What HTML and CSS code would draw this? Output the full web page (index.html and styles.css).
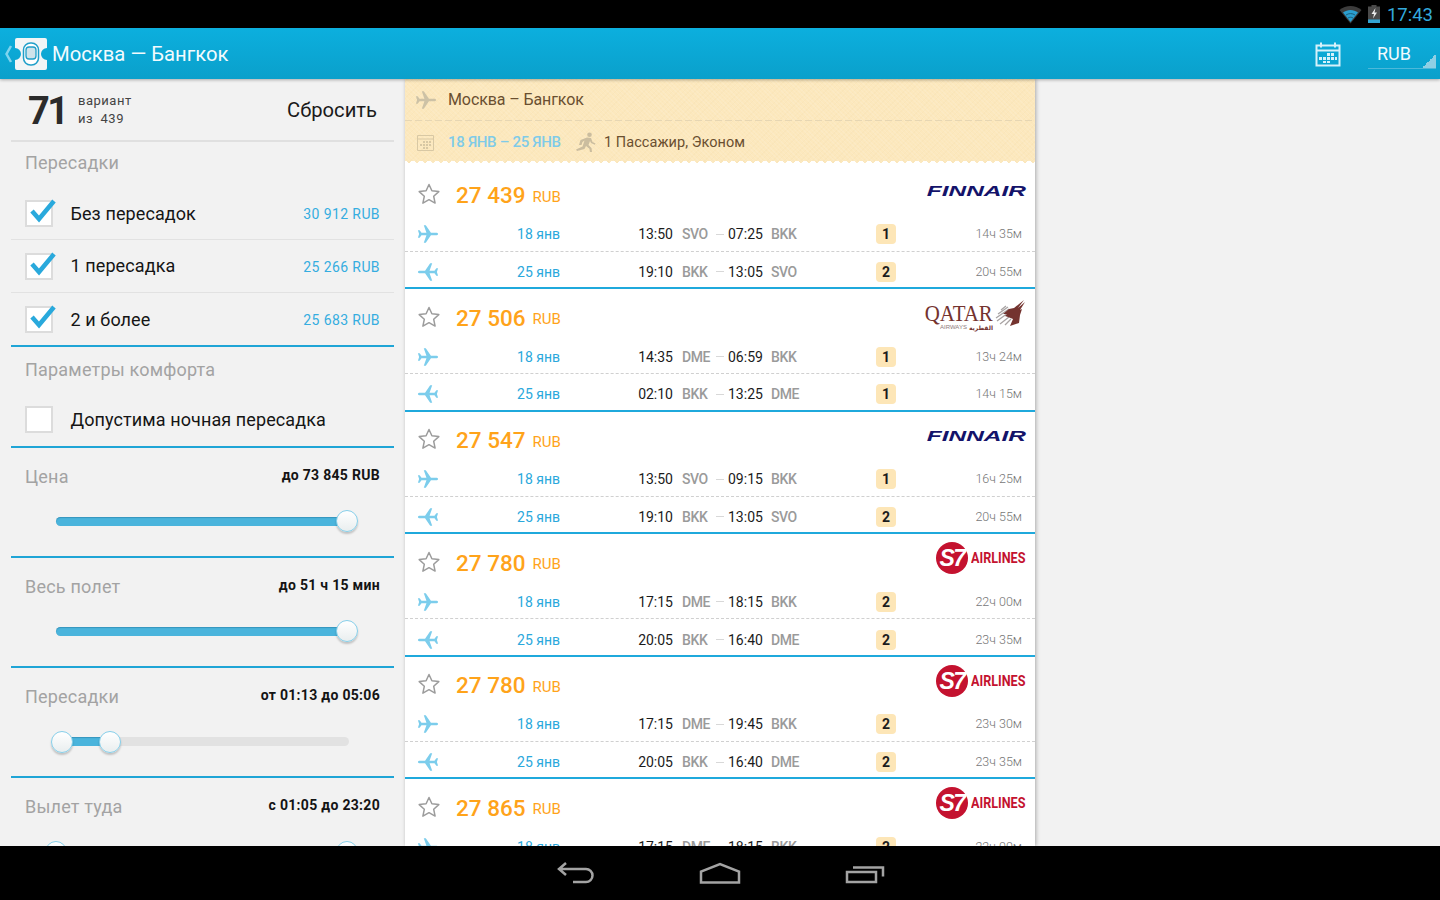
FILE: index.html
```html
<!DOCTYPE html>
<html lang="ru">
<head>
<meta charset="utf-8">
<title>Москва — Бангкок</title>
<link rel="stylesheet" href="styles.css">
</head>
<body>
<svg class="defs" width="0" height="0">
  <symbol id="plane" viewBox="0 0 24 24"><path d="M23 12c0-.9-1.100-1.400-2.200-1.400h-5.600L9.600 2.500H7.400l2.900 8.100H4.900L2.900 8H1l1.300 4L1 16h1.900l2-2.600h5.400l-2.900 8.100h2.200l5.600-8.100h5.600c1.100 0 2.200-.5 2.200-1.400z"/></symbol>
  <symbol id="star" viewBox="0 0 24 24"><path d="M12 2.500l2.900 6.300 6.900.8-5.100 4.700 1.400 6.800-6.100-3.400-6.100 3.400 1.400-6.800L2.200 9.600l6.900-.8z" fill="none" stroke="#9c9c9c" stroke-width="1.500" stroke-linejoin="round"/></symbol>
  <symbol id="check" viewBox="0 0 32 28"><path d="M6 13l7 8L28 3" fill="none" stroke="#29a9dc" stroke-width="4.500"/></symbol>
  <symbol id="bird" viewBox="0 0 31 28"><path d="M11 7l-5 4M13 8L3 15M14 10L1 19M13 14L2 22M14 18L5 25M16 20l-6 6" stroke="#a8a3a3" stroke-width="1.300" fill="none"/><path d="M8 15l6-5 5-1L29 1l-6 8 7-6-5 8 2-1-2 6-1 8-9 3 3-7-5-2-3-1 2-2z" fill="#74332f"/></symbol>
</svg>

<header class="status">
  <svg class="wifi" width="23" height="20" viewBox="0 0 23 20"><path d="M.5 6C6.800.6 16.200.6 22.500 6L11.500 19.500z" fill="#3c3c3c"/><path d="M4 8.500c4.300-3.400 10.700-3.400 15 0L11.500 18z" fill="#2a9fd0"/><path d="M7 11c2.700-1.900 6.300-1.900 9 0M9 14c1.500-1 3.500-1 5 0" fill="none" stroke="#1a5f7d"/></svg>
  <svg class="batt" width="12" height="18" viewBox="0 0 12 18"><path d="M3.500 0h5v1.500H12V18H0V1.500h3.500z" fill="#4a4a4a"/><path d="M0 14.500h12V18H0z" fill="#33a4d2"/><path d="M7.500 3L3.500 9h2.500l-1 4.500 4-6H6.500z" fill="#eee"/></svg>
  <span class="clock">17:43</span>
</header>

<div class="bar">
  <svg class="chev" width="9" height="20" viewBox="0 0 9 20"><path d="M7 2L2.500 10 7 18" fill="none" stroke="#7fd4ee" stroke-width="2.500"/></svg>
  <svg class="logo" width="34" height="34" viewBox="0 0 34 34"><path d="M3 1h28a2 2 0 0 1 2 2v8a6 6 0 0 0 0 12v8a2 2 0 0 1-2 2H3a2 2 0 0 1-2-2v-8a6 6 0 0 0 0-12V3a2 2 0 0 1 2-2z" fill="#f2f5f6"/><rect x="9.500" y="6" width="15" height="22" rx="7" fill="#fff" stroke="#1f9fc9" stroke-width="1.500"/><rect x="12" y="10" width="10" height="12" rx="3" fill="#cfe3ea" stroke="#1f9fc9" stroke-width="1.300"/></svg>
  <h1 class="bar-title">Москва — Бангкок</h1>
  <svg class="cal" width="26" height="26" viewBox="0 0 26 26"><path d="M1.500 4.500h23v20h-23zM1.500 9.500h23M6 1.500v5M20 1.500v5" fill="none" stroke="#d6f1fa" stroke-width="2"/><path d="M12 12h3v3h-3zM16 12h3v3h-3zM8 16h3v3H8zM12 16h3v3h-3zM16 16h3v3h-3zM20 16h2v3h-2zM4 16h3v3H4zM8 20h3v2H8zM12 20h3v2h-3z" fill="#d6f1fa"/></svg>
  <div class="cur">RUB<span class="cur-tri"></span></div>
</div>

<main class="content">
  <aside class="filters">
    <div class="summary">
      <strong class="count">71</strong>
      <div class="count-sub"><span>вариант</span><span>из&nbsp; 439</span></div>
      <span class="reset">Сбросить</span>
    </div>
    <section class="group group-stops">
      <h2 class="gtitle">Пересадки</h2>
      <div class="crow"><span class="box"><svg class="tick" width="32" height="28"><use href="#check"/></svg></span><span class="clabel">Без пересадок</span><span class="cprice">30 912 RUB</span></div>
      <div class="crow"><span class="box"><svg class="tick" width="32" height="28"><use href="#check"/></svg></span><span class="clabel">1 пересадка</span><span class="cprice">25 266 RUB</span></div>
      <div class="crow crow-last"><span class="box"><svg class="tick" width="32" height="28"><use href="#check"/></svg></span><span class="clabel">2 и более</span><span class="cprice">25 683 RUB</span></div>
    </section>
    <section class="group group-comfort">
      <h2 class="gtitle">Параметры комфорта</h2>
      <div class="crow crow-last crow-one"><span class="box"></span><span class="clabel">Допустима ночная пересадка</span></div>
    </section>
    <section class="group range">
      <div class="rhead"><h2 class="gtitle">Цена</h2><span class="rval">до 73 845 RUB</span></div>
      <div class="track"><div class="fill fill-all"></div><span class="thumb thumb-end"></span></div>
    </section>
    <section class="group range">
      <div class="rhead"><h2 class="gtitle">Весь полет</h2><span class="rval">до 51 ч 15 мин</span></div>
      <div class="track"><div class="fill fill-all"></div><span class="thumb thumb-end"></span></div>
    </section>
    <section class="group range">
      <div class="rhead"><h2 class="gtitle">Пересадки</h2><span class="rval">от 01:13 до 05:06</span></div>
      <div class="track"><div class="fill fill-part"></div><span class="thumb thumb-a"></span><span class="thumb thumb-b"></span></div>
    </section>
    <section class="group range">
      <div class="rhead"><h2 class="gtitle">Вылет туда</h2><span class="rval">с 01:05 до 23:20</span></div>
      <div class="track"><div class="fill fill-all"></div><span class="thumb thumb-c"></span><span class="thumb thumb-d"></span></div>
    </section>
  </aside>

  <div class="list">
    <div class="ticket-head">
      <div class="th-row1">
        <svg class="th-plane" width="22" height="22"><use href="#plane"/></svg>
        <span class="th-route">Москва – Бангкок</span>
      </div>
      <div class="th-row2">
        <svg class="th-cal" width="17" height="18" viewBox="0 0 17 18"><path d="M.5 2.500h16v15H.5zM.5 6h16" fill="none" stroke="#d8c8a4"/><path d="M6 8h2v2H6zM9 8h2v2H9zM12 8h2v2h-2zM3 11h2v2H3zM6 11h2v2H6zM9 11h2v2H9zM12 11h2v2h-2zM6 14h2v2H6zM9 14h2v2H9z" fill="#d8c8a4"/></svg>
        <span class="th-dates">18 ЯНВ – 25 ЯНВ</span>
        <svg class="th-man" width="20" height="20" viewBox="0 0 20 20"><circle cx="13.500" cy="2.800" r="2.300" fill="#cbbd9f"/><path d="M11 5.500l4 .5 1.500 4 3 1.500-.7 1.300-3.800-1.800-1-2-1.500 4 3 3 .5 4h-2l-.6-3.300-3.400-2.700-1.500 3L1 19l-1-1.600 6.500-3 2-6-2 1.500-1 3L3 13l1.500-5z" fill="#cbbd9f"/></svg>
        <span class="th-pax">1 Пассажир, Эконом</span>
      </div>
    </div>

    <article class="card">
      <div class="ctop"><svg class="star" width="24" height="24"><use href="#star"/></svg><span class="price">27 439</span><span class="rub">RUB</span><span class="brand finnair"><span class="finnair-t">FINNAIR</span></span></div>
      <div class="leg leg-out"><svg class="lp" width="22" height="22"><use href="#plane"/></svg><span class="date">18 янв</span><span class="t">13:50</span><span class="c">SVO</span><span class="dash"></span><span class="t t2">07:25</span><span class="c">BKK</span><span class="stops">1</span><span class="dur">14ч 35м</span></div>
      <div class="leg leg-back"><svg class="lp back" width="22" height="22"><use href="#plane"/></svg><span class="date">25 янв</span><span class="t">19:10</span><span class="c">BKK</span><span class="dash"></span><span class="t t2">13:05</span><span class="c">SVO</span><span class="stops">2</span><span class="dur">20ч 55м</span></div>
    </article>

    <article class="card">
      <div class="ctop"><svg class="star" width="24" height="24"><use href="#star"/></svg><span class="price">27 506</span><span class="rub">RUB</span>
        <span class="brand qatar">
          <span class="q-text"><span class="q-name">QATAR</span><span class="q-sub"><span class="q-en">AIRWAYS</span><span class="q-ar">القطرية</span></span></span>
          <svg class="q-bird" width="31" height="28"><use href="#bird"/></svg>
        </span>
      </div>
      <div class="leg leg-out"><svg class="lp" width="22" height="22"><use href="#plane"/></svg><span class="date">18 янв</span><span class="t">14:35</span><span class="c">DME</span><span class="dash"></span><span class="t t2">06:59</span><span class="c">BKK</span><span class="stops">1</span><span class="dur">13ч 24м</span></div>
      <div class="leg leg-back"><svg class="lp back" width="22" height="22"><use href="#plane"/></svg><span class="date">25 янв</span><span class="t">02:10</span><span class="c">BKK</span><span class="dash"></span><span class="t t2">13:25</span><span class="c">DME</span><span class="stops">1</span><span class="dur">14ч 15м</span></div>
    </article>

    <article class="card">
      <div class="ctop"><svg class="star" width="24" height="24"><use href="#star"/></svg><span class="price">27 547</span><span class="rub">RUB</span><span class="brand finnair"><span class="finnair-t">FINNAIR</span></span></div>
      <div class="leg leg-out"><svg class="lp" width="22" height="22"><use href="#plane"/></svg><span class="date">18 янв</span><span class="t">13:50</span><span class="c">SVO</span><span class="dash"></span><span class="t t2">09:15</span><span class="c">BKK</span><span class="stops">1</span><span class="dur">16ч 25м</span></div>
      <div class="leg leg-back"><svg class="lp back" width="22" height="22"><use href="#plane"/></svg><span class="date">25 янв</span><span class="t">19:10</span><span class="c">BKK</span><span class="dash"></span><span class="t t2">13:05</span><span class="c">SVO</span><span class="stops">2</span><span class="dur">20ч 55м</span></div>
    </article>

    <article class="card">
      <div class="ctop"><svg class="star" width="24" height="24"><use href="#star"/></svg><span class="price">27 780</span><span class="rub">RUB</span><span class="brand s7"><span class="s7-disc">S7</span><span class="s7-name">AIRLINES</span></span></div>
      <div class="leg leg-out"><svg class="lp" width="22" height="22"><use href="#plane"/></svg><span class="date">18 янв</span><span class="t">17:15</span><span class="c">DME</span><span class="dash"></span><span class="t t2">18:15</span><span class="c">BKK</span><span class="stops">2</span><span class="dur">22ч 00м</span></div>
      <div class="leg leg-back"><svg class="lp back" width="22" height="22"><use href="#plane"/></svg><span class="date">25 янв</span><span class="t">20:05</span><span class="c">BKK</span><span class="dash"></span><span class="t t2">16:40</span><span class="c">DME</span><span class="stops">2</span><span class="dur">23ч 35м</span></div>
    </article>

    <article class="card">
      <div class="ctop"><svg class="star" width="24" height="24"><use href="#star"/></svg><span class="price">27 780</span><span class="rub">RUB</span><span class="brand s7"><span class="s7-disc">S7</span><span class="s7-name">AIRLINES</span></span></div>
      <div class="leg leg-out"><svg class="lp" width="22" height="22"><use href="#plane"/></svg><span class="date">18 янв</span><span class="t">17:15</span><span class="c">DME</span><span class="dash"></span><span class="t t2">19:45</span><span class="c">BKK</span><span class="stops">2</span><span class="dur">23ч 30м</span></div>
      <div class="leg leg-back"><svg class="lp back" width="22" height="22"><use href="#plane"/></svg><span class="date">25 янв</span><span class="t">20:05</span><span class="c">BKK</span><span class="dash"></span><span class="t t2">16:40</span><span class="c">DME</span><span class="stops">2</span><span class="dur">23ч 35м</span></div>
    </article>

    <article class="card">
      <div class="ctop"><svg class="star" width="24" height="24"><use href="#star"/></svg><span class="price">27 865</span><span class="rub">RUB</span><span class="brand s7"><span class="s7-disc">S7</span><span class="s7-name">AIRLINES</span></span></div>
      <div class="leg leg-out"><svg class="lp" width="22" height="22"><use href="#plane"/></svg><span class="date">18 янв</span><span class="t">17:15</span><span class="c">DME</span><span class="dash"></span><span class="t t2">18:15</span><span class="c">BKK</span><span class="stops">2</span><span class="dur">22ч 00м</span></div>
    </article>
  </div>
</main>

<nav class="nav">
  <svg width="38" height="22" viewBox="0 0 38 22"><path d="M9 1L2 7l7 6M2 7h27a6.500 6.500 0 0 1 0 13H16" fill="none" stroke="#a3a3a3" stroke-width="2.500"/></svg>
  <svg width="42" height="22" viewBox="0 0 42 22"><path d="M2 20.500V9.500L21 2l19 7.500v11z" fill="none" stroke="#a3a3a3" stroke-width="2.500"/></svg>
  <svg width="40" height="22" viewBox="0 0 40 22"><path d="M2 10h29v10H2zM8 5.500h30v9" fill="none" stroke="#a3a3a3" stroke-width="2.500"/></svg>
</nav>
</body>
</html>
```

FILE: styles.css
```css
* { box-sizing: border-box; }
html, body { margin: 0; height: 100%; }
body {
  width: 1440px; height: 900px; overflow: hidden;
  display: flex; flex-direction: column;
  background: #f2f2f2; color: #111;
  font-family: Roboto, "Liberation Sans", sans-serif;
}
h1, h2 { margin: 0; font-weight: 400; }
.defs { position: absolute; }

.status {
  height: 28px; flex: none; background: #000;
  display: flex; align-items: center; justify-content: flex-end;
  padding-right: 7px;
}
.wifi { margin-right: 6px; margin-top: -1px; }
.batt { margin-right: 7px; }
.clock { font-size: 18.500px; color: #33a9dc; margin-top: 1px; }

.bar {
  height: 51px; flex: none; position: relative; z-index: 3;
  display: flex; align-items: center;
  background: linear-gradient(#0cafde, #0aa0cb);
  box-shadow: 0 1px 3px rgba(0,0,0,.3);
  padding-left: 4px; color: #fff;
}
.chev { margin-right: 1px; margin-top: 1px; }
.logo { margin-top: 1px; }
.bar-title { font-size: 20.250px; margin-left: 4px; color: #f2fbfe; margin-top: 1px; }
.cal { margin-left: auto; margin-right: 27px; }
.cur {
  position: relative; width: 68px; height: 28px; margin-right: 4px; margin-top: 3px;
  border-bottom: 1px solid #4cb9da;
  font-size: 18px; line-height: 26px; text-align: center; padding: 0 16px 0 0; color: #f2fbfe;
}
.cur-tri {
  position: absolute; right: 0; bottom: 0; width: 14px; height: 14px;
  background: linear-gradient(135deg, transparent 50%, #8fcfe4 50%);
}

.content { height: 767px; flex: none; display: flex; overflow: hidden; }

/* filters */
.filters { width: 405px; flex: none; padding: 0 11px; overflow: hidden; }
.summary {
  height: 63px; display: flex; align-items: center;
  border-bottom: 2px solid #e0e0e0; padding: 0 17px;
}
.count { font-size: 38px; font-weight: 700; color: #2b2b2b; width: 50px; letter-spacing: -2.500px; margin-top: 2px; }
.count-sub { display: flex; flex-direction: column; font-size: 13px; line-height: 17.500px; color: #444; letter-spacing: .5px; }
.reset { margin-left: auto; font-size: 20.200px; color: #1a1a1a; }
.group { border-bottom: 2px solid #1fa5d6; }
.gtitle { font-size: 18px; color: #a3a3a3; padding-left: 14px; line-height: 22px; letter-spacing: .2px; }
.group-stops { height: 205px; padding-top: 10px; }
.group-comfort { height: 100.500px; padding-top: 12px; }
.crow {
  height: 53px; display: flex; align-items: center; padding: 0 14px;
  border-bottom: 1px solid #e2e2e2;
}
.group-stops .crow:first-of-type { margin-top: 13px; }
.crow + .crow .clabel { margin-top: -1px; }
.crow-last { border-bottom: 0; }
.crow-one { height: 51px; margin-top: 13px; }
.box {
  position: relative; display: block; width: 28px; height: 27px; flex: none;
  background: #fff; border: 2px solid #dcdcdc;
}
.tick { position: absolute; left: -1px; top: -4px; }
.clabel { margin-left: 17.500px; font-size: 18px; color: #151515; letter-spacing: .1px; }
.cprice { margin-left: auto; margin-top: 1px; font-size: 14px; color: #35ade0; letter-spacing: .4px; }
.range { height: 110.300px; padding-top: 18px; }
.rhead { display: flex; align-items: flex-start; justify-content: space-between; padding-right: 14px; }
.rval { font-size: 14px; font-weight: 700; color: #141414; line-height: 18px; letter-spacing: .3px; }
.track {
  position: relative; height: 9px; margin: 29px 0 0 45px; width: 293px;
  background: #e2e2e2; border-radius: 5px;
}
.fill { position: absolute; top: 0; bottom: 0; background: #4ab4dc; border-radius: 5px; box-shadow: inset 0 1px 1px rgba(30,110,150,.45); }
.fill-all { left: 0; right: 0; }
.fill-part { left: 6px; width: 48px; border-radius: 0; }
.thumb {
  position: absolute; top: -6.500px; width: 22px; height: 22px; border-radius: 50%;
  background: linear-gradient(#fff, #e9eeef);
  border: 1px solid #86cfea; box-shadow: 0 2px 2px rgba(0,0,0,.2);
}
.thumb-end { right: -9px; }
.thumb-a { left: -5px; }
.thumb-b { left: 43px; }
.thumb-c { left: -11px; }
.thumb-d { right: -9px; }

/* list */
.list { width: 630px; flex: none; background: #fff; box-shadow: 1px 0 4px rgba(0,0,0,.3); position: relative; overflow: hidden; }
.ticket-head {
  position: relative; height: 86px; margin-bottom: 1.500px; color: #6a4f30; font-size: 16px;
  background-color: #fce8bd;
  background-image:
    repeating-linear-gradient(45deg, rgba(255,255,255,.1) 0 1px, transparent 1px 3px),
    repeating-linear-gradient(-45deg, rgba(190,150,70,.035) 0 1px, transparent 1px 4px);
}
.ticket-head::after {
  content: ""; position: absolute; left: 0; right: 0; bottom: 0; height: 4px;
  background:
    linear-gradient(45deg, #fff 50%, transparent 50%) 0 0 / 8px 4px repeat-x,
    linear-gradient(-45deg, #fff 50%, transparent 50%) 0 0 / 8px 4px repeat-x;
}
.th-row1 {
  height: 42px; display: flex; align-items: center; padding: 0 0 1px 10px;
  background: repeating-linear-gradient(90deg, #e6d6b3 0 7px, transparent 7px 10px) 0 100% / 100% 1px no-repeat;
}
.th-plane { fill: #cdc2a6; margin-right: 11px; }
.th-route { letter-spacing: -.1px; }
.th-row2 { height: 42px; display: flex; align-items: center; padding-left: 12px; font-size: 15px; }
.th-cal { margin-right: 14px; }
.th-dates { color: #7fcbe8; font-weight: 500; width: 128px; letter-spacing: -.3px; }
.th-man { margin-right: 8px; }
.th-pax { font-size: 14.500px; letter-spacing: .05px; }

.card {
  height: 122.600px; border-bottom: 2px solid #1fa9dc;
  display: flex; flex-direction: column;
}
.ctop { position: relative; height: 51px; flex: none; display: flex; align-items: center; padding: 6px 0 0 12px; }
.star { margin-right: 15px; margin-top: -2px; }
.price { font-size: 22.500px; font-weight: 500; color: #ffa31a; }
.rub { font-size: 15px; color: #ffa31a; margin-left: 7px; margin-top: 3px; }

.brand { position: absolute; right: 9px; }
.finnair { top: 16px; width: 100px; height: 16px; display: block; }
.finnair-t {
  display: block; text-align: right;
  font: italic 700 15.500px/16px "Liberation Sans", sans-serif; color: #14136a;
  transform: scaleX(1.580); transform-origin: right center; white-space: nowrap;
}
.qatar { top: 10px; display: flex; align-items: flex-start; }
.q-text { display: flex; flex-direction: column; align-items: flex-end; margin-right: 2px; color: #74332f; margin-top: 4px; }
.q-name { font: 400 23px/21px "Liberation Serif", serif; transform: scaleX(.91); transform-origin: right center; }
.q-sub { display: flex; align-items: center; font: 400 6px/7px "Liberation Sans", sans-serif; color: #8e7a7a; }
.q-en { margin-right: 2px; }
.q-ar { font: 700 6px/7px "DejaVu Sans", sans-serif; color: #74332f; }
.s7 { top: 8px; display: flex; align-items: center; }
.s7-disc {
  width: 32px; height: 32px; border-radius: 50%; background: #c4122f;
  color: #fff; font: italic 700 23px/32px "Liberation Sans", sans-serif; text-align: center; letter-spacing: -1.500px;
}
.s7-name {
  display: block; width: 55px; margin-left: 3px; color: #c4122f; white-space: nowrap;
  font: 700 14px/16px Roboto, sans-serif; transform: scaleX(.9); transform-origin: left center;
}

.leg {
  display: grid; align-items: center; flex: 1; min-height: 0;
  grid-template-columns: 22px 121px 113px 43px 12px 34px 1fr 20px 126px;
  padding: 0 13px 0 12px;
}
.leg-out { flex: none; height: 34px; border-bottom: 1px dashed #d0d0d0; margin-bottom: 4px; }
.leg-back { padding-top: 1px; }
.lp { fill: #7ccdec; }
.back { transform: scaleX(-1); }
.date { font-size: 14px; color: #2aa8dc; text-align: right; }
.t { font-size: 14px; color: #1b1b1b; text-align: right; }
.c { font-size: 14px; font-weight: 500; color: #9a9a9a; padding-left: 9px; letter-spacing: -.4px; }
.dash { height: 1px; background: #d8d8d8; width: 8px; }
.stops {
  width: 20px; height: 20px; border-radius: 4px; background: #fde6b7;
  font-size: 14px; font-weight: 700; color: #1c1c1c; text-align: center; line-height: 20px;
}
.dur { font-size: 12.500px; font-weight: 300; color: #777; text-align: right; margin-top: -1px; }

.nav {
  flex: 1; background: #000; position: relative; z-index: 4;
  display: flex; align-items: center; padding: 0 0 1px 557px; gap: 104px;
}
```
